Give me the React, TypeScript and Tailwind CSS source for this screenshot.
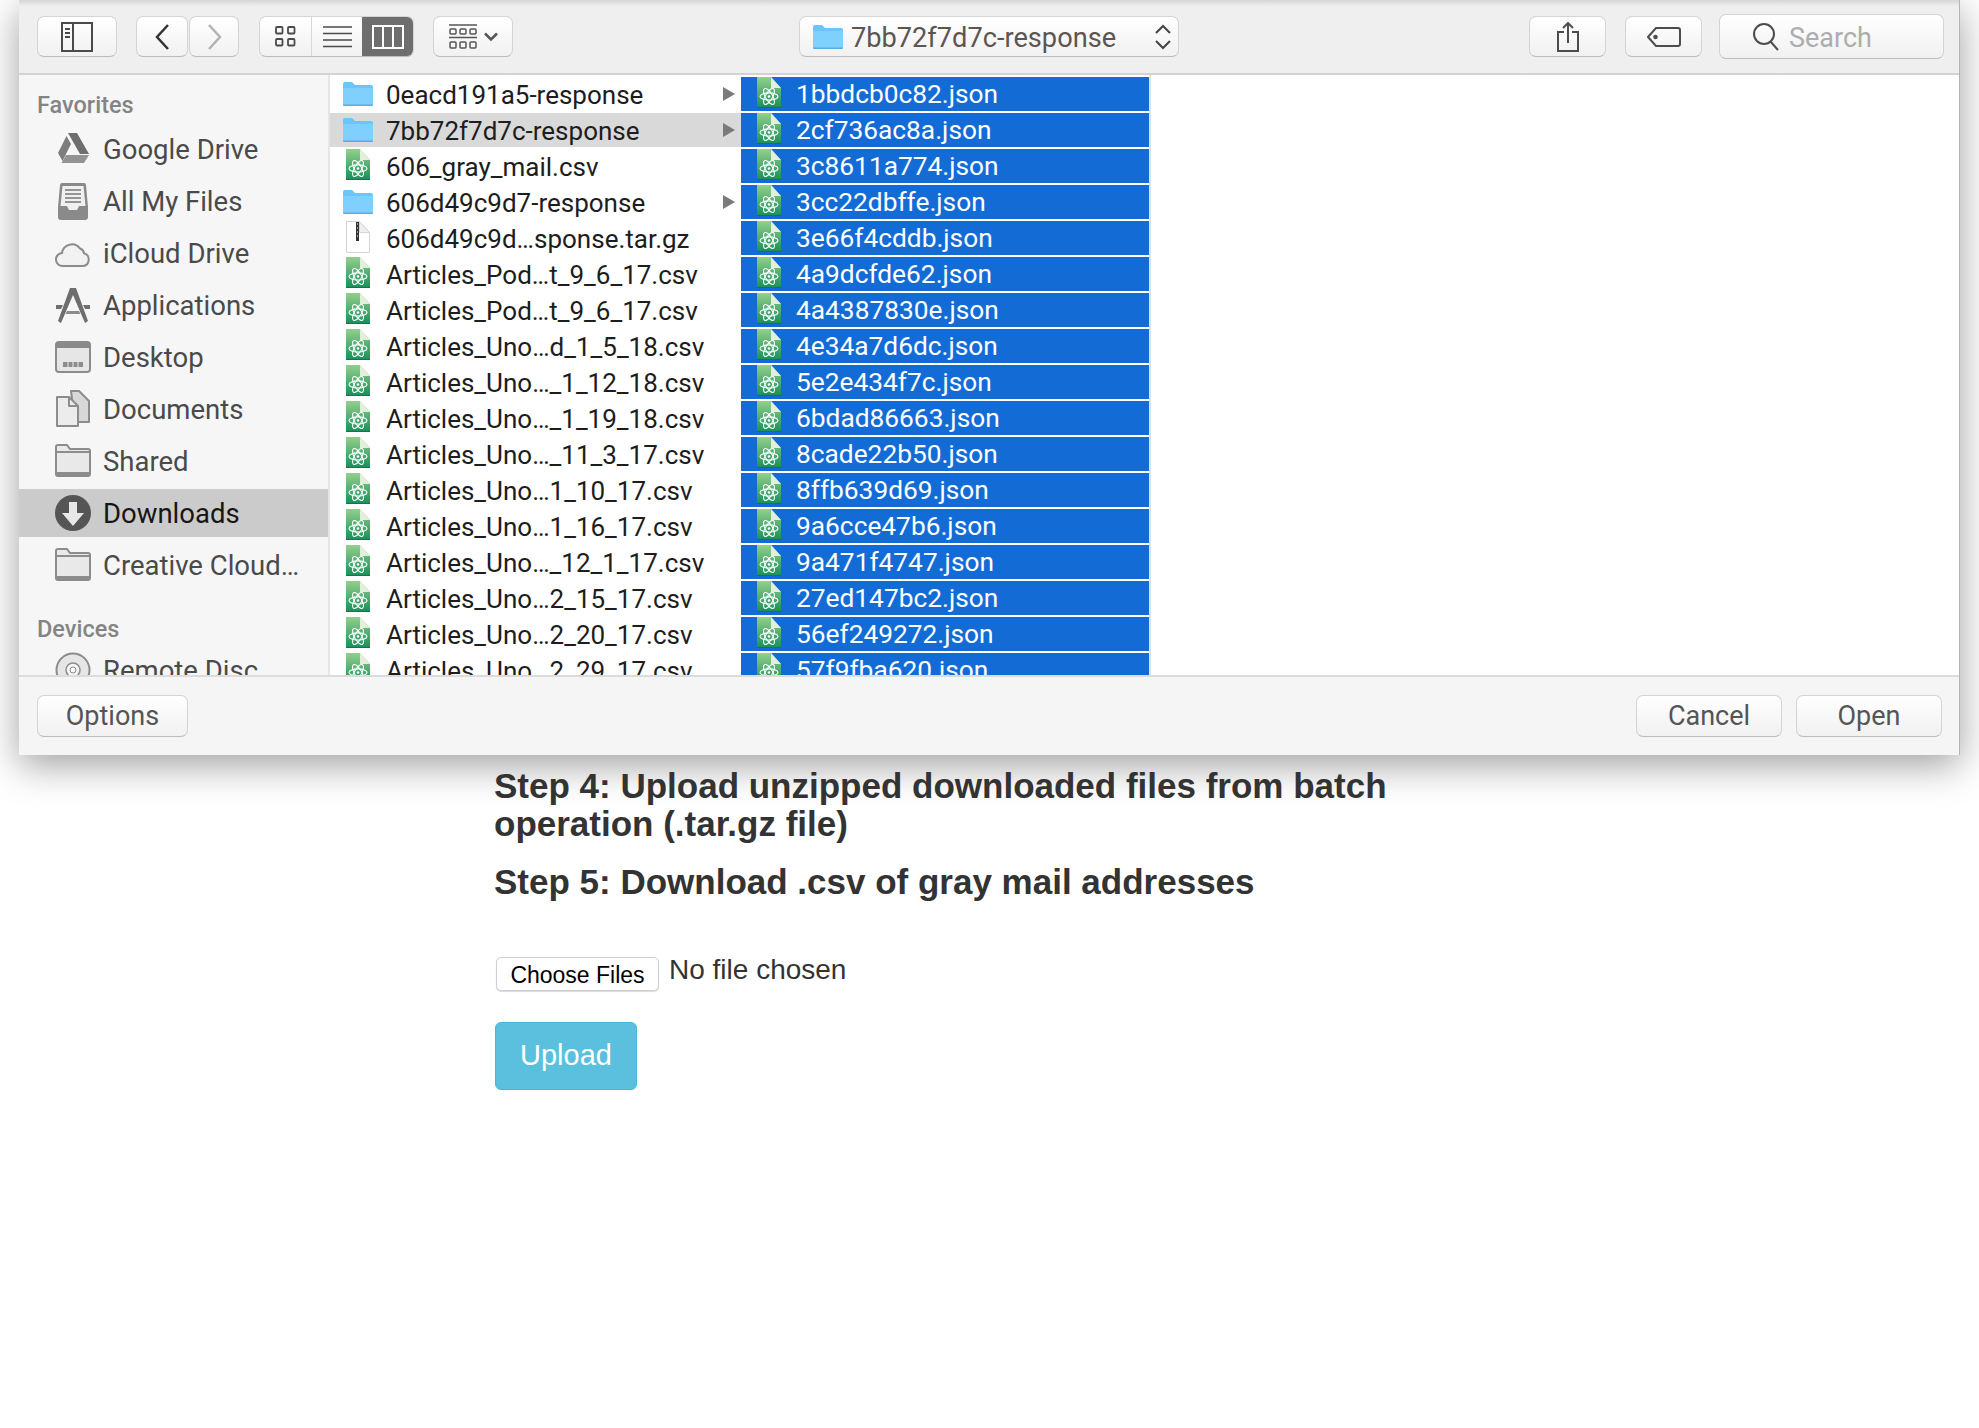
import React from "react";

const favorites = ["Google Drive", "All My Files", "iCloud Drive", "Applications", "Desktop", "Documents", "Shared", "Downloads", "Creative Cloud…"];

const parentItems = [
  { name: "0eacd191a5-response", kind: "folder", arrow: true },
  { name: "7bb72f7d7c-response", kind: "folder", arrow: true, active: true },
  { name: "606_gray_mail.csv", kind: "file" },
  { name: "606d49c9d7-response", kind: "folder", arrow: true },
  { name: "606d49c9d…sponse.tar.gz", kind: "zip" },
  { name: "Articles_Pod…t_9_6_17.csv", kind: "file" },
  { name: "Articles_Pod…t_9_6_17.csv", kind: "file" },
  { name: "Articles_Uno…d_1_5_18.csv", kind: "file" },
  { name: "Articles_Uno…_1_12_18.csv", kind: "file" },
  { name: "Articles_Uno…_1_19_18.csv", kind: "file" },
  { name: "Articles_Uno…_11_3_17.csv", kind: "file" },
  { name: "Articles_Uno…1_10_17.csv", kind: "file" },
  { name: "Articles_Uno…1_16_17.csv", kind: "file" },
  { name: "Articles_Uno…_12_1_17.csv", kind: "file" },
  { name: "Articles_Uno…2_15_17.csv", kind: "file" },
  { name: "Articles_Uno…2_20_17.csv", kind: "file" },
  { name: "Articles_Uno…2_29_17.csv", kind: "file" },
];

const jsonFiles = [
  "1bbdcb0c82.json", "2cf736ac8a.json", "3c8611a774.json", "3cc22dbffe.json", "3e66f4cddb.json", "4a9dcfde62.json",
  "4a4387830e.json", "4e34a7d6dc.json", "5e2e434f7c.json", "6bdad86663.json", "8cade22b50.json", "8ffb639d69.json",
  "9a6cce47b6.json", "9a471f4747.json", "27ed147bc2.json", "56ef249272.json", "57f9fba620.json",
];

function FolderIcon() {
  return (
    <svg width="30" height="24" viewBox="0 0 30 24" className="shrink-0">
      <path d="M0 2a2 2 0 0 1 2-2h7l3 3h16a2 2 0 0 1 2 2v17a2 2 0 0 1-2 2H2a2 2 0 0 1-2-2z" fill="#6cc4f8" />
      <path d="M0 6h30v16a2 2 0 0 1-2 2H2a2 2 0 0 1-2-2z" fill="#7fd0fd" />
      <path d="M0 22.500h30v.2a1.400 1.400 0 0 1-1.400 1.300H1.400A1.400 1.400 0 0 1 0 22.700z" fill="#58aee3" />
    </svg>
  );
}

function AtomFile() {
  return (
    <svg width="24" height="31" viewBox="0 0 24 31" className="shrink-0 -mt-[3px]">
      <defs>
        <linearGradient id="atomdoc" x1="0" y1="0" x2="0" y2="1">
          <stop offset="0" stopColor="#93d08c" />
          <stop offset="1" stopColor="#149059" />
        </linearGradient>
      </defs>
      <path d="M0 0h14l10 11v20H0z" fill="url(#atomdoc)" />
      <path d="M14 0l10 11H14z" fill="#e3efdc" />
      <path d="M0 30h24v1H0z" fill="#0d7a49" />
      <g fill="none" stroke="#fff" strokeWidth="1.100">
        <ellipse cx="12" cy="19.500" rx="9" ry="3.600" />
        <ellipse cx="12" cy="19.500" rx="9" ry="3.600" transform="rotate(60 12 19.500)" />
        <ellipse cx="12" cy="19.500" rx="9" ry="3.600" transform="rotate(120 12 19.500)" />
      </g>
      <circle cx="12" cy="19.500" r="1.300" fill="#fff" />
    </svg>
  );
}

function ZipFile() {
  return (
    <svg width="24" height="32" viewBox="0 0 24 32" className="shrink-0 -mt-[2px]">
      <path d="M.5.5h13l10 11v20H.5z" fill="#fff" stroke="#d4d4d4" />
      <path d="M13.500.5l10 11h-10z" fill="#f0f0f0" stroke="#d4d4d4" />
      <path d="M10 1h3v19h-3z" fill="#333" />
      <path d="M11 3h1M11 7h1M11 11h1M11 15h1" stroke="#fff" />
    </svg>
  );
}

function SidebarIcon({ name }: { name: string }) {
  const grey = "#8c8c8c";
  const dark = "#6e6e6e";
  const box = (children: React.ReactNode) => (
    <svg width="36" height="40" viewBox="0 0 36 40" className="shrink-0">
      {children}
    </svg>
  );
  switch (name) {
    case "Google Drive":
      return box(
        <g>
          <path d="M13 4h9l12 21H25z" fill="#6e6e6e" />
          <path d="M11.500 7l4.500 8L7.500 32 3 24z" fill="#7d7d7d" />
          <path d="M11 26h23l-5 8H6.500z" fill="#939393" />
        </g>
      );
    case "All My Files":
      return box(
        <g>
          <path d="M3 26L5 4a2 2 0 0 1 2-2h22a2 2 0 0 1 2 2l2 22v10a3 3 0 0 1-3 3H6a3 3 0 0 1-3-3z" fill="#8a8a8a" />
          <path d="M7.500 5h21L30.500 25H24l-2 4h-8l-2-4H5.500z" fill="#f0f0f0" />
          <path d="M10 9h16M10 13h16M10 17h16M10 21h16" stroke="#777" strokeWidth="1.700" />
        </g>
      );
    case "iCloud Drive":
      return box(
        <path d="M8 33a6.500 6.500 0 0 1-1-13A10 10 0 0 1 25 15.500a6 6 0 0 1 4 4.800A6.500 6.500 0 0 1 28 33z" fill="#f2f2f2" stroke={grey} strokeWidth="2" />
      );
    case "Applications":
      return box(
        <g>
          <path d="M15 3h6l12 33-3 2-12-28-12 28-3-2z" fill={dark} />
          <path d="M1 20h7l-2 4H1zM35 20h-7l2 4h5z" fill={dark} />
          <path d="M12 26h12l1.500 3h-15z" fill="#8c8c8c" />
        </g>
      );
    case "Desktop":
      return box(
        <g>
          <rect x="1" y="5" width="34" height="30" rx="3" fill="#e6e6e6" stroke={grey} strokeWidth="2" />
          <path d="M1 8a3 3 0 0 1 3-3h28a3 3 0 0 1 3 3v3H1z" fill="#8a8a8a" />
          <path d="M8 30h20v-5H8z" fill={grey} />
          <path d="M13 25v5M18 25v5M23 25v5" stroke="#eee" />
        </g>
      );
    case "Documents":
      return box(
        <g stroke={grey} strokeWidth="2" strokeLinejoin="round">
          <path d="M16 2h8l10 10v21H20z" fill="#d8d8d8" />
          <path d="M2 8h12l9 9v20H2z" fill="#ececec" />
          <path d="M14 8v9h9" fill="none" />
        </g>
      );
    case "Downloads":
      return box(
        <g>
          <circle cx="18" cy="20" r="18" fill="#555" />
          <path d="M14 9h8v11h7L18 33 7 20h7z" fill="#e8e8e8" />
        </g>
      );
    case "Remote Disc":
      return box(
        <g>
          <circle cx="18" cy="20" r="16.500" fill="#e6e6e6" stroke={grey} strokeWidth="2" />
          <circle cx="18" cy="20" r="7" fill="#f5f5f5" stroke={grey} strokeWidth="1.500" />
          <circle cx="18" cy="20" r="3" fill="#fff" stroke={grey} />
        </g>
      );
    default:
      // Shared and Creative Cloud use the same grey folder
      return box(
        <g>
          <path d="M1 6a2 2 0 0 1 2-2h9l3 4h18a2 2 0 0 1 2 2v23a2 2 0 0 1-2 2H3a2 2 0 0 1-2-2z" fill="#e9e9e9" stroke={grey} strokeWidth="2" />
          <path d="M1 11h34" stroke={grey} strokeWidth="2" />
          <path d="M1 31h34v2a2 2 0 0 1-2 2H3a2 2 0 0 1-2-2z" fill={grey} />
        </g>
      );
  }
}

function ToolButton({ className, children }: { className: string; children?: React.ReactNode }) {
  return (
    <div className={`flex items-center justify-center rounded-[7px] border border-[#d4d4d4] border-b-[#bcbcbc] bg-gradient-to-b from-white to-[#f1f1f1] ${className}`}>
      {children}
    </div>
  );
}

function SidebarItem({ name, selected }: { name: string; selected?: boolean }) {
  return (
    <div className={`flex h-[48px] items-center pl-[36px] ${selected ? "bg-[#cbcbcb] text-[#161616]" : "text-[#4a4a4a]"}`}>
      <SidebarIcon name={name} />
      <span className="ml-[12px] whitespace-nowrap pt-[2px]">{name}</span>
    </div>
  );
}

function Arrow() {
  return (
    <svg width="12" height="14" viewBox="0 0 12 14" className="ml-auto mr-[6px] shrink-0">
      <path d="M0 0l12 7-12 7z" fill="#7a7a7a" />
    </svg>
  );
}

export default function App() {
  return (
    <div className="min-h-[1428px] bg-white font-[Roboto,sans-serif]">
      {/* Open sheet */}
      <div className="ml-[19px] flex h-[755px] w-[1941px] flex-col overflow-hidden border-r border-[#b4b4b4] bg-[#f5f5f5] shadow-[0_10px_36px_rgba(0,0,0,0.38)]">
        {/* Toolbar */}
        <div className="flex h-[75px] shrink-0 items-center border-b-2 border-[#d2d2d2] bg-[#efefef] bg-gradient-to-b from-[#d6d6d6] from-0% to-[#efefef] to-[9%] pl-[18px] pr-[15px]">
          <ToolButton className="h-[41px] w-[80px]">
            <svg width="32" height="30" viewBox="0 0 32 30" fill="none" stroke="#4a4a4a" strokeWidth="2">
              <rect x="1" y="1" width="30" height="28" />
              <path d="M12 1v28M4 7h5M4 11h5M4 15h5" />
            </svg>
          </ToolButton>
          <ToolButton className="ml-[19px] h-[41px] w-[52px]">
            <svg width="15" height="26" viewBox="0 0 15 26" fill="none" stroke="#333" strokeWidth="2.500">
              <path d="M13 1L2 13l11 12" />
            </svg>
          </ToolButton>
          <ToolButton className="ml-[1px] h-[41px] w-[50px]">
            <svg width="15" height="26" viewBox="0 0 15 26" fill="none" stroke="#b3b3b3" strokeWidth="2.500">
              <path d="M2 1l11 12L2 25" />
            </svg>
          </ToolButton>
          {/* View mode segments */}
          <div className="ml-[20px] flex h-[41px] w-[155px] overflow-hidden rounded-[7px] border border-[#d4d4d4] border-b-[#bcbcbc] bg-gradient-to-b from-white to-[#f1f1f1]">
            <div className="flex w-[52px] items-center justify-center border-r border-[#d8d8d8]">
              <svg width="21" height="21" viewBox="0 0 21 21" fill="none" stroke="#4a4a4a" strokeWidth="1.800">
                <rect x="1" y="1" width="6.500" height="6.500" rx="1" />
                <rect x="13" y="1" width="6.500" height="6.500" rx="1" />
                <rect x="1" y="13" width="6.500" height="6.500" rx="1" />
                <rect x="13" y="13" width="6.500" height="6.500" rx="1" />
              </svg>
            </div>
            <div className="flex w-[50px] items-center justify-center">
              <svg width="29" height="22" viewBox="0 0 29 22" stroke="#4a4a4a" strokeWidth="1.600">
                <path d="M0 1h29M0 7.500h29M0 14h29M0 20.500h29" />
              </svg>
            </div>
            <div className="flex flex-1 items-center justify-center bg-[#6e6e6e]">
              <svg width="32" height="24" viewBox="0 0 32 24" fill="none" stroke="#fff" strokeWidth="2">
                <rect x="1" y="1" width="30" height="22" />
                <path d="M11 1v22M21 1v22" />
              </svg>
            </div>
          </div>
          <ToolButton className="ml-[19px] h-[41px] w-[80px] gap-[7px]">
            <svg width="28" height="26" viewBox="0 0 28 26" fill="none" stroke="#555" strokeWidth="1.500">
              <path d="M0 1h28M0 13.500h28" />
              <rect x="1" y="5" width="6" height="5" rx="1" />
              <rect x="11" y="5" width="6" height="5" rx="1" />
              <rect x="21" y="5" width="6" height="5" rx="1" />
              <rect x="1" y="18" width="6" height="6" rx="1" />
              <rect x="11" y="18" width="6" height="6" rx="1" />
              <rect x="21" y="18" width="6" height="6" rx="1" />
            </svg>
            <svg width="14" height="10" viewBox="0 0 14 10" fill="none" stroke="#555" strokeWidth="2.500">
              <path d="M1 1.500l6 6 6-6" />
            </svg>
          </ToolButton>
          {/* Path popup */}
          <ToolButton className="ml-[286px] h-[41px] w-[380px] !justify-start pl-[13px] pr-[7px]">
            <FolderIcon />
            <span className="ml-[8px] pt-[3px] text-[27.200px] text-[#5c5552]">7bb72f7d7c-response</span>
            <svg width="16" height="26" viewBox="0 0 16 26" fill="none" stroke="#444" strokeWidth="2" className="ml-auto">
              <path d="M1 9l7-7 7 7M1 17l7 7 7-7" />
            </svg>
          </ToolButton>
          <ToolButton className="ml-[350px] h-[41px] w-[77px]">
            <svg width="22" height="30" viewBox="0 0 22 30" fill="none" stroke="#4d4d4d" strokeWidth="2">
              <path d="M7 10H1v19h20V10h-6" />
              <path d="M11 21V1M6 6l5-5 5 5" />
            </svg>
          </ToolButton>
          <ToolButton className="ml-[19px] h-[41px] w-[77px]">
            <svg width="34" height="20" viewBox="0 0 34 20" fill="none" stroke="#4d4d4d" strokeWidth="2">
              <path d="M9 1h22a2 2 0 0 1 2 2v14a2 2 0 0 1-2 2H9l-8-9z" />
              <circle cx="8.500" cy="10" r="1.300" fill="#4d4d4d" />
            </svg>
          </ToolButton>
          <ToolButton className="ml-[17px] h-[45px] w-[225px] !justify-start pl-[33px]">
            <svg width="26" height="28" viewBox="0 0 26 28" fill="none" stroke="#4d4d4d" strokeWidth="2">
              <circle cx="11" cy="11" r="10" />
              <path d="M17.500 18.500L25 27" />
            </svg>
            <span className="ml-[10px] pt-[3px] text-[27px] text-[#adadad]">Search</span>
          </ToolButton>
        </div>

        {/* Browser panes */}
        <div className="flex h-[600px] shrink-0 overflow-hidden bg-white">
          <div className="h-full w-[311px] shrink-0 overflow-hidden border-r-2 border-[#e6e6e6] bg-[#f6f6f6] text-[27.500px]">
            <div className="mb-[5px] mt-[17px] flex h-[28px] items-center pl-[18px] text-[23.500px] font-medium text-[#848484]">Favorites</div>
            <div className="flex flex-col gap-[4px]">
              {favorites.map((name) => (
                <SidebarItem key={name} name={name} selected={name === "Downloads"} />
              ))}
            </div>
            <div className="mt-[27px] flex h-[28px] items-center pl-[18px] text-[23.500px] font-medium text-[#848484]">Devices</div>
            <div className="mt-[2px]">
              <SidebarItem name="Remote Disc" />
            </div>
          </div>

          <div className="flex w-[411px] shrink-0 flex-col gap-[2px] pt-[2px] text-[26px] text-[#1d1d1d]">
            {parentItems.map((item, i) => (
              <div key={i} className={`flex h-[34px] shrink-0 items-center pl-[13px] ${item.active ? "bg-[#d9d9d9]" : ""}`}>
                <div className="flex w-[30px] shrink-0 justify-center">
                  {item.kind === "folder" ? <FolderIcon /> : item.kind === "zip" ? <ZipFile /> : <AtomFile />}
                </div>
                <span className="ml-[13px] whitespace-nowrap pt-[2px]">{item.name}</span>
                {item.arrow && <Arrow />}
              </div>
            ))}
          </div>

          <div className="flex w-[410px] shrink-0 flex-col gap-[2px] border-r-2 border-[#e2e2e2] pt-[2px] text-[26.300px] text-white">
            {jsonFiles.map((name) => (
              <div key={name} className="flex h-[34px] shrink-0 items-center bg-[#136cd6] pl-[13px]">
                <div className="flex w-[30px] shrink-0 justify-center">
                  <AtomFile />
                </div>
                <span className="ml-[12px] whitespace-nowrap pt-[2px]">{name}</span>
              </div>
            ))}
          </div>
        </div>

        {/* Footer buttons */}
        <div className="flex h-[80px] shrink-0 items-center border-t-2 border-[#dcdcdc] bg-[#f5f5f5] pl-[18px] pr-[17px] text-[27px] text-[#555]">
          <ToolButton className="h-[42px] w-[151px]">Options</ToolButton>
          <ToolButton className="ml-auto h-[42px] w-[146px]">Cancel</ToolButton>
          <ToolButton className="ml-[14px] h-[42px] w-[146px]">Open</ToolButton>
        </div>
      </div>

      {/* Page behind the sheet */}
      <div className="ml-[494px] w-[950px] pt-[12px] font-['Liberation_Sans',Arial,sans-serif] text-[#333]">
        <h3 className="text-[35px] font-bold leading-[38px]">Step 4: Upload unzipped downloaded files from batch operation (.tar.gz file)</h3>
        <h3 className="mt-[20px] text-[35px] font-bold leading-[38px]">Step 5: Download .csv of gray mail addresses</h3>
        <div className="mt-[53px] flex items-start">
          <button className="ml-[2px] mt-[3px] h-[34px] w-[163px] rounded-[5px] border border-[#cfcfcf] bg-white text-[23px] text-black shadow-[0_1px_1px_rgba(0,0,0,0.15)]">
            Choose Files
          </button>
          <span className="ml-[10px] text-[28px] leading-[32px]">No file chosen</span>
        </div>
        <button className="ml-[1px] mt-[31px] block h-[68px] w-[142px] rounded-[6px] border border-[#46b8da] bg-[#5bc0de] text-[29px] text-white">Upload</button>
      </div>
    </div>
  );
}
